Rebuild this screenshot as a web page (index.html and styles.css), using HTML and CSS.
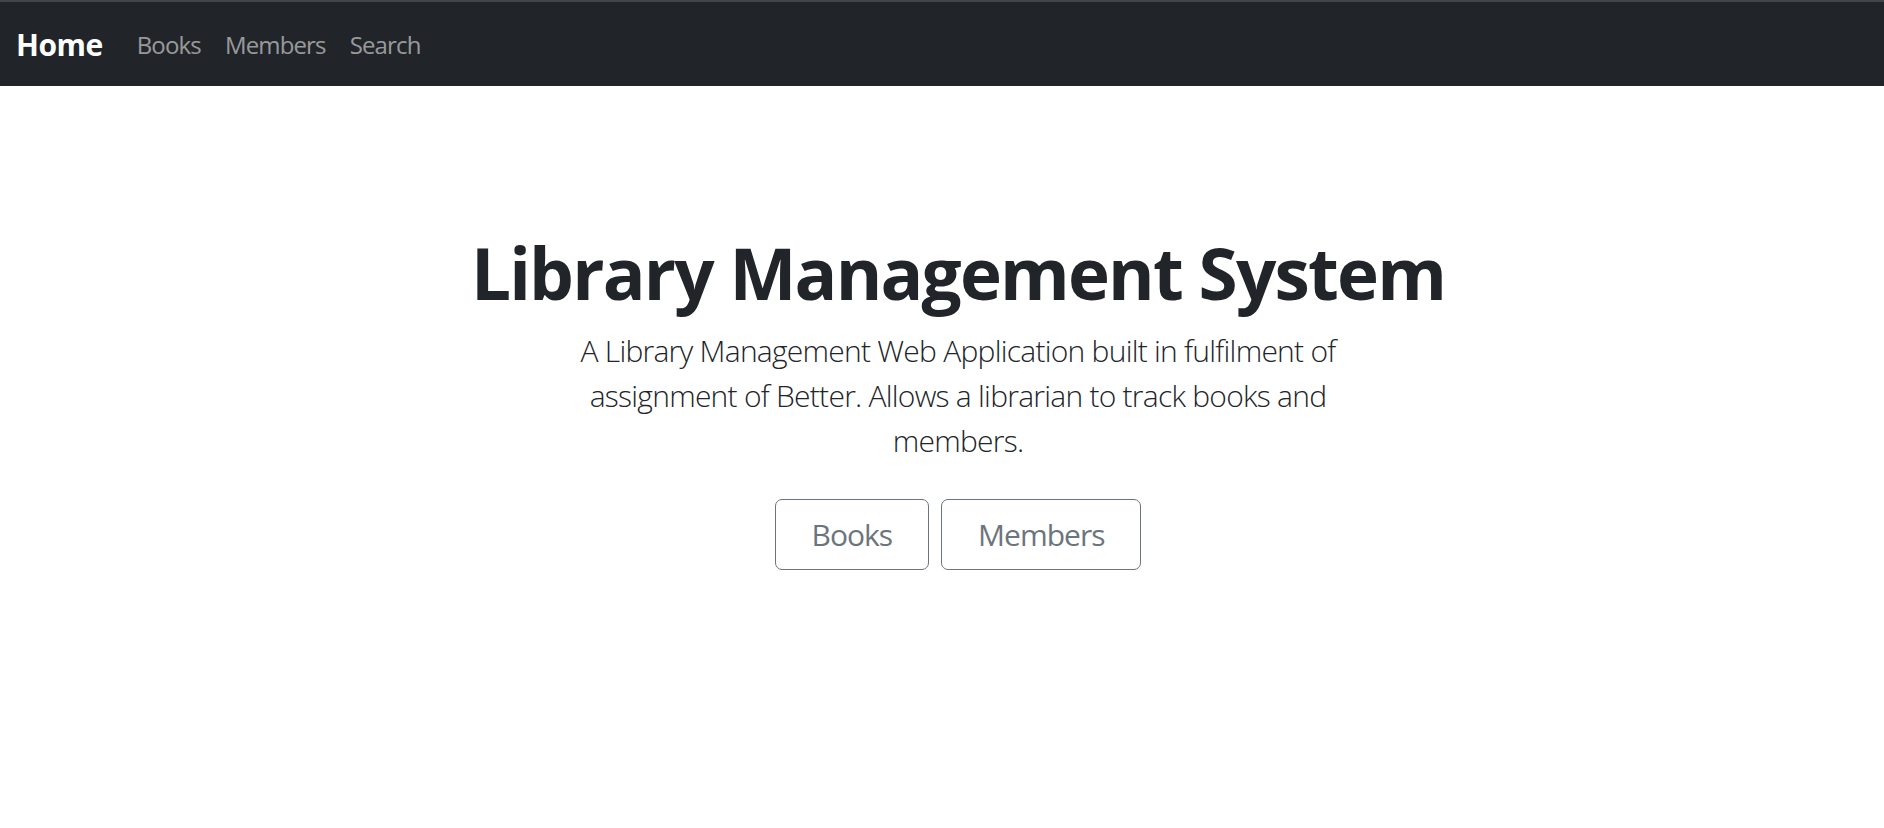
FILE: index.html
```html
<!DOCTYPE html>
<html lang="en">
<head>
<meta charset="utf-8">
<title>Library Management System</title>
<link rel="stylesheet" href="styles.css">
</head>
<body>
<nav class="navbar">
  <div class="nav-inner">
    <a class="brand" href="#">Home</a>
    <ul class="nav-links">
      <li><a class="nav-link" href="#">Books</a></li>
      <li><a class="nav-link" href="#">Members</a></li>
      <li><a class="nav-link" href="#">Search</a></li>
    </ul>
  </div>
</nav>
<main class="hero">
  <h1 class="hero-title">Library Management System</h1>
  <div class="hero-body">
    <p class="lead">A Library Management Web Application built in fulfilment of assignment of Better. Allows a librarian to track books and members.</p>
    <div class="actions">
      <button class="btn" type="button">Books</button>
      <button class="btn" type="button">Members</button>
    </div>
  </div>
</main>
</body>
</html>
```
FILE: styles.css
```css
* { box-sizing: border-box; }
html, body { margin: 0; padding: 0; }
body {
  font-family: "Open Sans", "Noto Sans", "Liberation Sans", sans-serif;
  color: #212529;
  background: #fff;
  font-size: 24px;
  line-height: 1.5;
}
.navbar {
  background: #212529;
  border-top: 2px solid #42454a;
  padding: 12px 0;
}
.nav-inner {
  display: flex;
  align-items: center;
  padding: 0 16px;
}
.brand {
  font-size: 30px;
  font-weight: 700;
  letter-spacing: -0.5px;
  color: #fff;
  text-decoration: none;
  padding: 7.5px 0;
  margin-right: 22px;
  line-height: 45px;
}
.nav-links {
  display: flex;
  list-style: none;
  margin: 0;
  padding: 0;
}
.nav-link {
  display: block;
  padding: 13px 12px 11px;
  color: rgba(255,255,255,.55);
  text-decoration: none;
  line-height: 36px;
  letter-spacing: -0.85px;
}
.hero {
  margin: 72px 0;
  padding: 72px 20px 72px 52px;
  text-align: center;
}
.hero-title {
  margin: 0 0 12px;
  font-size: 71px;
  font-weight: 700;
  letter-spacing: -1.8px;
  line-height: 86px;
}
.hero-body {
  width: 800px;
  margin: 0 auto;
}
.lead {
  font-size: 30px;
  font-weight: 300;
  letter-spacing: -0.75px;
  line-height: 1.5;
  margin: 0 0 36px;
}
.actions {
  display: flex;
  justify-content: center;
  gap: 12px;
}
.btn {
  font-family: inherit;
  font-size: 30px;
  letter-spacing: -1px;
  line-height: 1.5;
  padding: 12px 36px;
  color: #6c757d;
  background: transparent;
  border: 1px solid #6c757d;
  border-radius: 7px;
}
```
